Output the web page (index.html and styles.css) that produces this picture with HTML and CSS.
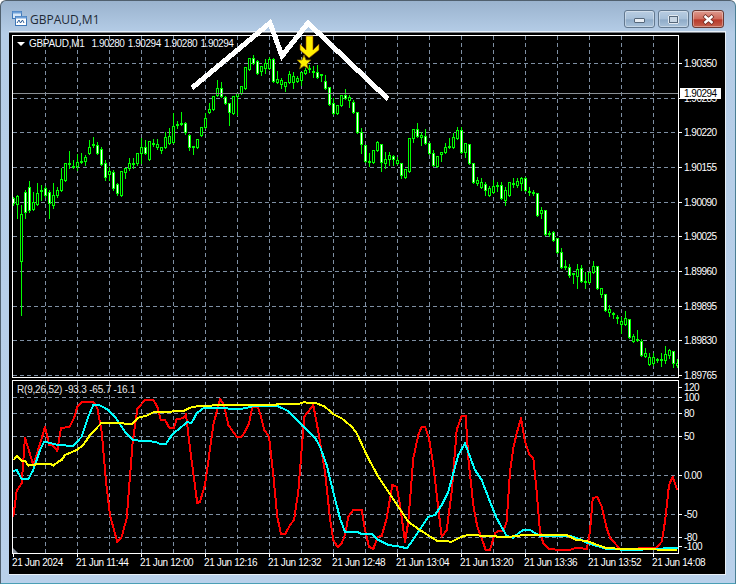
FILE: index.html
```html
<!DOCTYPE html>
<html lang="en">
<head>
    <meta charset="UTF-8">
    <title>GBPAUD,M1</title>
    <link rel="stylesheet" href="styles.css">
</head>
<body>
    <div class="window">
        <div class="titlebar">
            <svg class="app-icon" width="16" height="16" viewBox="0 0 16 16">
                <rect x="1.5" y="0.5" width="9" height="7" fill="#d8e8f8" stroke="#3f78b8"/>
                <rect x="1.5" y="0.5" width="9" height="2" fill="#6fa0d8"/>
                <rect x="4.5" y="5.5" width="11" height="9" fill="#fff" stroke="#3f78b8"/>
                <rect x="4.5" y="5.5" width="11" height="2" fill="#6fa0d8"/>
                <path d="M6 12l2-3 1.5 3 2-3 1.5 3" fill="none" stroke="#2f5f98"/>
            </svg>
            <span class="title">GBPAUD,M1</span>
            <div class="controls">
                <div class="ctl"><span class="ico-min"></span></div>
                <div class="ctl"><span class="ico-max"></span></div>
                <div class="ctl ctl-close">
                    <svg width="15" height="11" viewBox="0 0 15 11">
                        <path d="M3 1.500l9 8M12 1.500l-9 8" stroke="#6b2a22" stroke-width="4" fill="none"/>
                        <path d="M3.500 2l8 7M11.500 2l-8 7" stroke="#fff" stroke-width="2.400" fill="none"/>
                    </svg>
                </div>
            </div>
        </div>

        <div class="client">
            <div class="row-main">
                <div class="pane pane-main">
                    <div class="pane-label">
                        <span class="tri"></span>
                        <span>GBPAUD,M1</span>
                        <span class="ohlc">1.90280 1.90294 1.90280 1.90294</span>
                    </div>
                    <svg id="main-chart" class="plot" viewBox="13 36 665 341"></svg>
                </div>
                <div class="axis" id="price-axis">
                    <div class="bid-tag">1.90294</div>
                </div>
            </div>
            <div class="row-sub">
                <div class="pane pane-sub">
                    <div class="pane-label sub-label">R(9,26,52) -93.3 -65.7 -16.1</div>
                    <svg id="sub-chart" class="plot" viewBox="13 381 665 172"></svg>
                    <span class="corner"></span>
                </div>
                <div class="axis" id="sub-axis"></div>
            </div>
            <div class="time-axis" id="time-axis"></div>
        </div>

        <!-- dessin par dessus le graphique -->
        <svg class="overlay" width="736" height="584" viewBox="0 0 736 584">
            <polyline points="192,88 270,23 282,56 308,23 388,99" fill="none" stroke="#fff" stroke-width="5" stroke-linejoin="miter" shape-rendering="crispEdges"/>
            <path d="M306 36h7v14l6-6v6l-10 8-9-8v-6l6 6z" fill="#ffee00" stroke="#8a3a00" stroke-width="0.6"/>
            <path d="M304 55l2 5h5l-4 4 1.500 5-4.500-3-4.500 3 1.500-5-4-4h5z" fill="#ffee00" stroke="#7a5a00" stroke-width="0.8"/>
        </svg>
    </div>
    <script src="script.js"></script>
</body>
</html>
```

FILE: styles.css
```css
* {
    margin: 0;
    padding: 0;
    box-sizing: border-box;
}

body {
    font-family: "Liberation Sans", Arial, sans-serif;
    background-color: #fff;
    width: 736px;
    height: 584px;
    overflow: hidden;
}

.window {
    position: relative;
    width: 736px;
    height: 584px;
    display: flex;
    flex-direction: column;
    background: linear-gradient(to bottom, #9ab3ce 0, #b5cde7 32px, #b9d1eb 100%);
    border: 1px solid #50606e;
    border-bottom-color: #4a9fb5;
    border-right-color: #4a7f95;
    border-radius: 6px 6px 0 0;
}

.titlebar {
    height: 31px;
    display: flex;
    align-items: center;
    padding: 5px 11px 0 10px;
    flex: none;
}

.app-icon {
    flex: none;
}

.title {
    margin-left: 3px;
    font-family: "Open Sans", sans-serif;
    font-size: 12px;
    color: #1f2a36;
}

.controls {
    margin-left: auto;
    display: flex;
    gap: 3px;
}

.ctl {
    width: 31px;
    height: 18px;
    display: flex;
    align-items: center;
    justify-content: center;
    border: 1px solid #62788f;
    border-radius: 3px;
    background: linear-gradient(to bottom, #b9cde2 0, #a6bfd8 50%, #8fabc8 55%, #a9c2da 100%);
    box-shadow: inset 0 0 0 1px rgba(255, 255, 255, 0.35);
}

.ctl-close {
    width: 32px;
    border-color: #6b3a34;
    background: linear-gradient(to bottom, #dd9a8e 0, #cf6a5a 50%, #b8392a 55%, #c4604c 100%);
}

.ico-min {
    width: 11px;
    height: 5px;
    margin-top: 3px;
    background-color: #e8eef4;
    border: 1px solid #55677a;
    border-radius: 1px;
}

.ico-max {
    width: 11px;
    height: 9px;
    background-color: #c8d6e4;
    border: 2px solid #55677a;
    outline: 1px solid #e2eaf2;
    outline-offset: -1px;
    border-radius: 1px;
}

.client {
    margin: 0 10px 9px 8px;
    flex: 1;
    background-color: #000;
    border-top: 1px solid #7a7f86;
    padding: 2px 0 0 3px;
    box-shadow: 0 0 0 1px #e8f0f8;
    clip-path: inset(-1px -3px -1px 0);
    display: flex;
    flex-direction: column;
    color: #fff;
    font-size: 10px;
}

.row-main {
    display: flex;
    height: 343px;
    margin-bottom: 2px;
}

.row-sub {
    display: flex;
    height: 174px;
}

.pane {
    position: relative;
    width: 667px;
    border: 1px solid #fff;
}

.plot {
    display: block;
    width: 665px;
}

#main-chart {
    height: 341px;
}

#sub-chart {
    height: 172px;
}

.pane-label {
    position: absolute;
    top: 2px;
    left: 3px;
    display: flex;
    align-items: center;
    gap: 5px;
    letter-spacing: -0.3px;
    color: #f4f8ff;
    white-space: nowrap;
    z-index: 1;
}

.ohlc {
    margin-left: 2px;
    letter-spacing: -0.45px;
    word-spacing: 1px;
}

.sub-label {
    top: 3px;
    left: 4px;
    letter-spacing: -0.2px;
    color: #e8e8e8;
}

.tri {
    width: 0;
    height: 0;
    margin-left: 1px;
    margin-right: -1px;
    border-left: 4px solid transparent;
    border-right: 4px solid transparent;
    border-top: 4px solid #fff;
}

.corner {
    position: absolute;
    left: 0;
    bottom: 0;
    width: 0;
    height: 0;
    border-left: 5px solid #8a929c;
    border-top: 5px solid transparent;
}

.axis {
    position: relative;
    width: 46px;
}

.tick-label {
    position: absolute;
    left: 5px;
    letter-spacing: -0.5px;
    line-height: 8px;
    white-space: nowrap;
}

.tick-label::before {
    content: "";
    position: absolute;
    left: -5px;
    top: 3px;
    width: 3px;
    height: 1px;
    background-color: #fff;
}

.bid-tag {
    position: absolute;
    top: 53px;
    left: 1px;
    width: 41px;
    height: 11px;
    padding-left: 4px;
    background-color: #fff;
    color: #000;
    line-height: 12px;
    letter-spacing: -0.5px;
    z-index: 1;
}

.time-axis {
    display: flex;
    height: 20px;
}

.time-label {
    position: relative;
    width: 64px;
    padding-top: 2px;
    letter-spacing: -0.38px;
    line-height: 13px;
    white-space: nowrap;
}

.time-label::before {
    content: "";
    position: absolute;
    top: 0;
    left: 1px;
    width: 1px;
    height: 3px;
    background-color: #fff;
}

.overlay {
    position: absolute;
    top: -1px;
    left: -1px;
    pointer-events: none;
}
```

FILE: script.js
```js
const NS = 'http://www.w3.org/2000/svg';
const GREEN = '#00ff00';
const GRID = '#7e8fa3';

// top, bottom, high, low, white body
const candles = [
    [198,203,197,205,1],[196,204,195,218,0],[214,261,205,315,0],[192,212,190,218,1],[187,210,181,212,1],
    [202,209,192,210,0],[193,204,183,205,0],[190,191,185,200,0],[188,195,186,197,1],[192,203,190,218,1],
    [195,205,183,208,0],[190,195,187,197,0],[179,190,168,191,0],[163,180,163,181,0],[163,164,151,168,0],
    [166,167,160,168,0],[162,166,154,170,0],[161,162,153,163,0],[157,161,155,165,0],[147,153,140,154,0],
    [144,145,137,147,0],[145,153,142,154,1],[149,164,147,165,1],[163,177,160,180,1],[171,174,167,180,0],
    [172,188,170,190,1],[184,193,183,195,1],[171,195,171,196,0],[168,172,168,178,0],[163,168,158,170,0],
    [163,164,158,168,0],[153,163,153,165,0],[147,153,138,163,0],[147,153,140,154,1],[141,159,141,160,0],
    [143,144,139,146,0],[144,147,139,149,0],[147,150,147,153,0],[137,147,132,148,0],[136,143,128,144,0],
    [126,142,113,143,0],[124,125,121,128,0],[123,124,112,125,0],[123,132,122,134,1],[135,147,134,150,1],
    [146,147,146,154,0],[139,147,139,148,0],[127,135,127,136,0],[118,127,113,128,0],[109,112,103,113,0],
    [96,109,96,110,0],[88,95,80,96,0],[88,96,82,97,1],[97,103,96,104,1],[103,112,103,125,1],
    [96,113,96,114,0],[93,96,93,115,0],[86,93,86,94,0],[67,88,67,89,0],[58,69,58,70,0],
    [58,63,55,64,1],[61,73,60,74,1],[66,71,66,75,0],[63,68,59,73,0],[59,68,57,69,0],
    [59,81,58,82,1],[79,82,71,83,0],[80,84,78,88,0],[82,86,82,91,0],[74,82,71,83,0],
    [76,82,72,88,0],[78,81,76,82,0],[72,80,72,85,0],[70,73,68,74,0],[68,69,65,72,0],
    [71,72,66,77,0],[72,77,65,78,1],[74,75,74,81,0],[81,88,75,89,1],[87,104,87,105,1],
    [103,113,98,114,1],[105,113,105,114,0],[95,105,95,106,0],[95,98,89,99,1],[97,100,95,107,0],
    [102,112,100,113,1],[112,132,112,133,1],[132,144,128,153,1],[145,161,145,162,1],[161,162,153,166,0],
    [150,162,150,163,0],[142,150,141,151,0],[144,162,144,171,1],[159,163,152,168,0],[155,159,152,165,0],
    [156,159,155,165,1],[160,163,157,164,0],[163,175,163,178,1],[169,177,169,178,0],[138,171,138,172,0],
    [129,138,129,142,0],[129,136,123,137,1],[135,137,132,145,0],[136,143,129,144,1],[143,153,143,154,1],
    [153,165,150,166,1],[156,166,156,167,0],[152,154,152,161,0],[147,152,143,153,0],[146,147,138,148,0],
    [137,147,133,148,0],[130,138,127,139,0],[130,152,127,153,1],[143,152,143,157,0],[144,163,144,164,1],
    [163,182,163,183,1],[180,183,177,185,0],[182,187,178,188,0],[184,190,182,195,1],[188,195,186,196,0],
    [186,192,180,193,0],[185,186,182,191,0],[185,198,182,199,1],[190,200,187,205,0],[182,195,182,196,0],
    [183,184,178,187,0],[181,185,178,187,0],[178,183,177,190,0],[178,190,177,191,1],[191,192,187,195,0],
    [192,193,190,195,0],[193,215,193,216,1],[210,213,207,218,0],[210,234,210,235,1],[233,234,231,236,0],
    [232,240,231,241,1],[238,252,238,253,1],[252,267,248,268,1],[266,267,260,269,0],[267,275,264,277,1],
    [273,274,273,283,0],[269,276,264,288,0],[268,281,265,282,1],[281,282,272,288,0],[272,282,272,283,0],
    [266,272,261,273,0],[266,288,266,289,1],[288,294,288,297,0],[294,310,294,311,1],[309,312,305,316,0],
    [313,314,312,318,0],[317,318,315,323,0],[321,324,317,333,0],[318,324,311,325,0],[319,337,319,338,1],
    [336,341,334,342,0],[339,340,330,341,0],[341,355,339,356,1],[353,356,348,357,0],[357,364,353,365,0],
    [357,363,353,365,0],[359,360,358,362,0],[359,360,353,366,0],[354,360,346,363,0],[350,355,349,358,0],
    [351,363,351,367,1],[363,365,359,367,0]
];

const priceTicks = [
    ['1.90350', 63], ['1.90285', 98], ['1.90220', 132], ['1.90155', 167], ['1.90090', 202],
    ['1.90025', 236], ['1.89960', 271], ['1.89895', 306], ['1.89830', 340], ['1.89765', 375]
];
const levelTicks = [
    ['120', 387], ['100', 397], ['80', 413], ['50', 436], ['0.00', 475],
    ['-50', 514], ['-80', 537], ['-100', 546]
];
const gridLevels = [397, 413, 436, 475, 514, 537];
const times = ['21 Jun 2024', '21 Jun 11:44', '21 Jun 12:00', '21 Jun 12:16', '21 Jun 12:32',
    '21 Jun 12:48', '21 Jun 13:04', '21 Jun 13:20', '21 Jun 13:36', '21 Jun 13:52', '21 Jun 14:08'];

// lines of the indicator, by x offset, values measured at 3x
const red = [
    [0, [40,425,50,348,65,325,75,188,100,270,122,200,135,155,148,210,160,212,172,228,183,158,208,157,222,130,232,95,248,80,280,80,292,100,305,170,318,320,330,420,352,502,365,485,380,430,398,200,412,102,435,75,460,75,472,95,482,135,495,135,508,158,522,158,530,132,548,130,558,118,570,220,592,385,600,380,615,330,640,150,660,72,672,90,685,150,710,185,725,185,735,170]],
    [245, [12,145,22,95,38,95,48,125,58,165,72,185,85,300,97,425,108,478,120,478,135,450,147,435,160,350,178,125,205,90,220,170,240,290,255,430,265,495,278,517,290,505,300,480,310,425,325,405,350,405,360,465,372,515,385,522,398,485,410,483,425,430,442,330,455,335,465,390,480,500,490,440,505,250,520,180,530,155,540,155,552,190,565,270,580,400,590,485,605,465,620,350,635,165,650,122,662,122,670,250,685,390,697,455,710,490,722,525,735,525]],
    [490, [15,475,25,467,40,467,50,440,60,290,70,220,80,175,93,130,105,200,118,238,130,250,140,350,150,470,160,505,178,523,240,525,258,518,290,522,300,470,308,370,322,365,335,395,350,460,360,488,375,505,392,525,440,522,450,518,500,518,515,500,525,440,537,330,548,305,562,345]]
];
const cyan = [
    [0, [40,288,50,285,65,312,85,312,100,285,120,225,133,200,175,210,220,213,245,185,265,125,280,90,298,90,325,105,345,125,375,170,400,195,430,198,465,200,480,207,497,207,520,175,540,160,560,142,575,143,590,115,610,100,680,100,700,103,735,100]],
    [245, [30,92,95,92,130,108,180,160,210,188,225,215,245,270,262,340,285,430,300,470,335,470,350,477,382,477,400,495,430,510,465,515,485,520,500,500,550,425,570,420,590,390,610,350,640,240,660,205,690,285,710,315,735,380]],
    [490, [20,430,50,483,70,488,85,475,100,465,120,465,150,483,240,483,270,493,290,503,350,522,430,525,530,520,565,518]]
];
const yellow = [
    [0, [40,256,52,242,65,258,75,258,85,272,110,268,150,266,160,272,175,260,185,255,195,240,230,225,250,210,270,180,305,143,350,143,395,148,415,128,440,122,460,112,550,108,570,98,600,92,735,90]],
    [245, [90,90,100,87,160,87,175,82,215,85,240,95,265,118,290,130,320,155,335,175,370,250,400,305,440,365,490,440,520,462,575,497,620,500,650,485,670,480,735,483]],
    [490, [50,487,100,480,230,480,260,495,290,498,350,520,560,525]]
];

function el(svg, name, attrs) {
    const node = document.createElementNS(NS, name);
    for (const key in attrs) {
        node.setAttribute(key, attrs[key]);
    }
    svg.appendChild(node);
    return node;
}

function drawGrid(svg, levels, top, bottom) {
    for (let x = 45; x <= 653; x += 32) {
        el(svg, 'line', { x1: x + 0.5, x2: x + 0.5, y1: top, y2: bottom, stroke: GRID, 'stroke-dasharray': '4 3', 'shape-rendering': 'crispEdges' });
    }
    levels.forEach(function(y) {
        el(svg, 'line', { x1: 13, x2: 678, y1: y + 0.5, y2: y + 0.5, stroke: GRID, 'stroke-dasharray': '4 3', 'shape-rendering': 'crispEdges' });
    });
}

function drawCandles(svg) {
    candles.forEach(function(c, i) {
        const x = 13 + 4 * i;
        el(svg, 'line', { x1: x + 0.5, x2: x + 0.5, y1: c[2], y2: c[3] + 1, stroke: GREEN, 'shape-rendering': 'crispEdges' });
        el(svg, 'rect', {
            x: x - 0.5, y: c[0] + 0.5, width: 2, height: c[1] - c[0],
            fill: c[4] ? '#fff' : '#000', stroke: GREEN, 'shape-rendering': 'crispEdges'
        });
    });
}

function drawLine(svg, parts, color) {
    const points = [];
    parts.forEach(function(part) {
        for (let i = 0; i < part[1].length; i += 2) {
            points.push((part[0] + part[1][i] / 3).toFixed(1) + ',' + (375 + part[1][i + 1] / 3).toFixed(1));
        }
    });
    el(svg, 'polyline', { points: points.join(' '), fill: 'none', stroke: color, 'stroke-width': 2, 'stroke-linejoin': 'round', 'shape-rendering': 'crispEdges' });
}

function drawTicks(axis, ticks, origin) {
    ticks.forEach(function(t) {
        const label = document.createElement('div');
        label.className = 'tick-label';
        label.textContent = t[0];
        label.style.top = (t[1] - origin - 3) + 'px';
        axis.appendChild(label);
    });
}

const mainChart = document.getElementById('main-chart');
const subChart = document.getElementById('sub-chart');

drawGrid(mainChart, priceTicks.map(function(t) { return t[1]; }), 36, 377);
drawCandles(mainChart);
el(mainChart, 'line', { x1: 13, x2: 678, y1: 93.5, y2: 93.5, stroke: '#8a8f94', 'shape-rendering': 'crispEdges' });

drawGrid(subChart, gridLevels, 381, 553);
drawLine(subChart, red, '#ff0000');
drawLine(subChart, cyan, '#00ffff');
drawLine(subChart, yellow, '#ffff00');

drawTicks(document.getElementById('price-axis'), priceTicks, 35);
drawTicks(document.getElementById('sub-axis'), levelTicks, 380);

const timeAxis = document.getElementById('time-axis');
times.forEach(function(t) {
    const label = document.createElement('div');
    label.className = 'time-label';
    label.textContent = t;
    timeAxis.appendChild(label);
});
```
